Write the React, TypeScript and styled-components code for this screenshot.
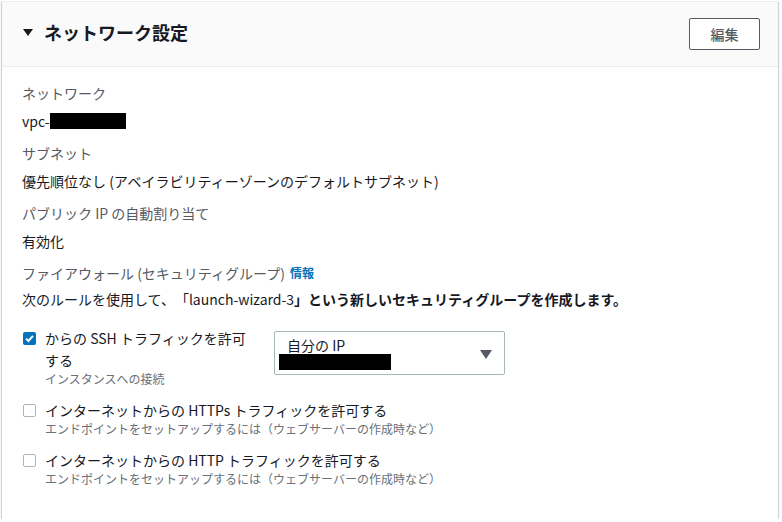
import React from "react"
import styled, { createGlobalStyle } from "styled-components"

const GlobalStyle = createGlobalStyle`
  html, body {
    margin: 0;
    padding: 0;
    background: #ffffff;
  }
  body {
    font-family: "Noto Sans CJK JP", "Open Sans", sans-serif;
    color: #16191f;
    font-size: 14px;
    text-spacing-trim: space-all;
  }
`

const Panel = styled.section`
  margin: 1px 0 0 2px;
  width: 776px;
  height: 517px;
  background: #ffffff;
  border-top: 1px solid #eaeded;
  box-shadow: 0 1px 1px 0 rgba(0, 28, 36, 0.3), 1px 1px 1px 0 rgba(0, 28, 36, 0.15),
    -1px 1px 1px 0 rgba(0, 28, 36, 0.15);
  display: flex;
  flex-direction: column;
`

const Header = styled.header`
  height: 64px;
  display: flex;
  align-items: center;
  justify-content: space-between;
  padding: 0 18px 0 21px;
  background: #fafafa;
  border-bottom: 1px solid #eaeded;
`

const Title = styled.h2`
  margin: 0 0 4px 0;
  display: flex;
  align-items: center;
  gap: 11px;
  font-size: 18px;
  font-weight: 700;
  line-height: 22px;
  color: #16191f;
`

const Caret = styled.span<{ $size: number; $color: string }>`
  display: inline-block;
  width: 0;
  height: 0;
  border-left: ${(p) => p.$size}px solid transparent;
  border-right: ${(p) => p.$size}px solid transparent;
  border-top: ${(p) => p.$size * 1.5}px solid ${(p) => p.$color};
`

const EditButton = styled.button`
  width: 71px;
  height: 32px;
  background: #ffffff;
  border: 1px solid #545b64;
  border-radius: 2px;
  color: #545b64;
  font-family: inherit;
  font-size: 14px;
  font-weight: 500;
  padding: 0;
`

const Body = styled.div`
  padding: 15px 20px 0 20px;
  display: flex;
  flex-direction: column;
`

const Field = styled.div<{ $tight?: boolean }>`
  display: flex;
  flex-direction: column;
  gap: ${(p) => (p.$tight ? 4 : 6)}px;
  margin-bottom: ${(p) => (p.$tight ? 0 : 10)}px;
`

const Label = styled.div`
  font-size: 14px;
  line-height: 22px;
  color: #545b64;
  display: flex;
  align-items: center;
  gap: 5px;
`

const Value = styled.div`
  font-size: 14px;
  line-height: 22px;
  color: #16191f;
  display: flex;
  align-items: center;
  white-space: nowrap;
`

const Strong = styled.span`
  font-weight: 700;
`

const InfoLink = styled.a`
  font-size: 12px;
  font-weight: 700;
  color: #0073bb;
  text-decoration: none;
`

const Redacted = styled.span<{ $w: number; $h: number }>`
  display: inline-block;
  width: ${(p) => p.$w}px;
  height: ${(p) => p.$h}px;
  background: #000000;
`

const Options = styled.div`
  margin-top: 17px;
  display: flex;
  flex-direction: column;
  gap: 12px;
`

const OptionRow = styled.div`
  display: flex;
  align-items: flex-start;
  gap: 22px;
`

const Option = styled.label<{ $width?: number }>`
  display: flex;
  align-items: flex-start;
  gap: 9px;
  width: ${(p) => (p.$width ? `${p.$width}px` : "auto")};
`

const Box = styled.span<{ $checked?: boolean }>`
  flex: none;
  width: 13px;
  height: 13px;
  margin: 5px 0 0 1px;
  box-sizing: border-box;
  border-radius: 2px;
  border: ${(p) => (p.$checked ? "none" : "1px solid #aab7b8")};
  background: ${(p) => (p.$checked ? "#0073bb" : "#ffffff")};
  display: flex;
  align-items: center;
  justify-content: center;
`

const OptionText = styled.div`
  display: flex;
  flex-direction: column;
`

const OptionTitle = styled.div`
  font-size: 14px;
  line-height: 22px;
  color: #16191f;
`

const OptionHint = styled.div`
  font-size: 12px;
  line-height: 16px;
  color: #687078;
`

const Select = styled.div`
  margin-top: 4px;
  width: 231px;
  height: 44px;
  box-sizing: border-box;
  border: 1px solid #aab7b8;
  border-radius: 2px;
  padding: 3px 12px 0 4px;
  display: flex;
  align-items: center;
  justify-content: space-between;
`

const SelectValue = styled.div`
  display: flex;
  flex-direction: column;
`

const SelectTitle = styled.span`
  font-size: 14px;
  line-height: 18px;
  padding-left: 8px;
  margin-top: -4px;
  color: #16191f;
`

const Check = () => (
  <svg width="11" height="11" viewBox="0 0 11 11">
    <path d="M2 5.6 L4.4 8 L9 2.8" fill="none" stroke="#ffffff" strokeWidth="2" />
  </svg>
)

const Checkbox = ({ title, hint, checked, width }: { title: string; hint: string; checked?: boolean; width?: number }) => (
  <Option $width={width}>
    <Box $checked={checked}>{checked && <Check />}</Box>
    <OptionText>
      <OptionTitle>{title}</OptionTitle>
      <OptionHint>{hint}</OptionHint>
    </OptionText>
  </Option>
)

const hint = "エンドポイントをセットアップするには（ウェブサーバーの作成時など）"

export default function App() {
  return (
    <>
      <GlobalStyle />
      <Panel>
        <Header>
          <Title>
            <Caret $size={5} $color="#16191f" />
            ネットワーク設定
          </Title>
          <EditButton>編集</EditButton>
        </Header>
        <Body>
          <Field>
            <Label>ネットワーク</Label>
            <Value>
              vpc-
              <Redacted $w={76} $h={16} />
            </Value>
          </Field>
          <Field>
            <Label>サブネット</Label>
            <Value>優先順位なし (アベイラビリティーゾーンのデフォルトサブネット)</Value>
          </Field>
          <Field>
            <Label>パブリック IP の自動割り当て</Label>
            <Value>有効化</Value>
          </Field>
          <Field $tight>
            <Label>
              ファイアウォール (セキュリティグループ)
              <InfoLink href="#">情報</InfoLink>
            </Label>
            <Value>
              次のルールを使用して、「launch-wizard-3
              <Strong>」という新しいセキュリティグループを作成します。</Strong>
            </Value>
          </Field>
          <Options>
            <OptionRow>
              <Checkbox checked width={230} title="からの SSH トラフィックを許可する" hint="インスタンスへの接続" />
              <Select>
                <SelectValue>
                  <SelectTitle>自分の IP</SelectTitle>
                  <Redacted $w={112} $h={16} />
                </SelectValue>
                <Caret $size={6} $color="#545b64" />
              </Select>
            </OptionRow>
            <Checkbox title="インターネットからの HTTPs トラフィックを許可する" hint={hint} />
            <Checkbox title="インターネットからの HTTP トラフィックを許可する" hint={hint} />
          </Options>
        </Body>
      </Panel>
    </>
  )
}
